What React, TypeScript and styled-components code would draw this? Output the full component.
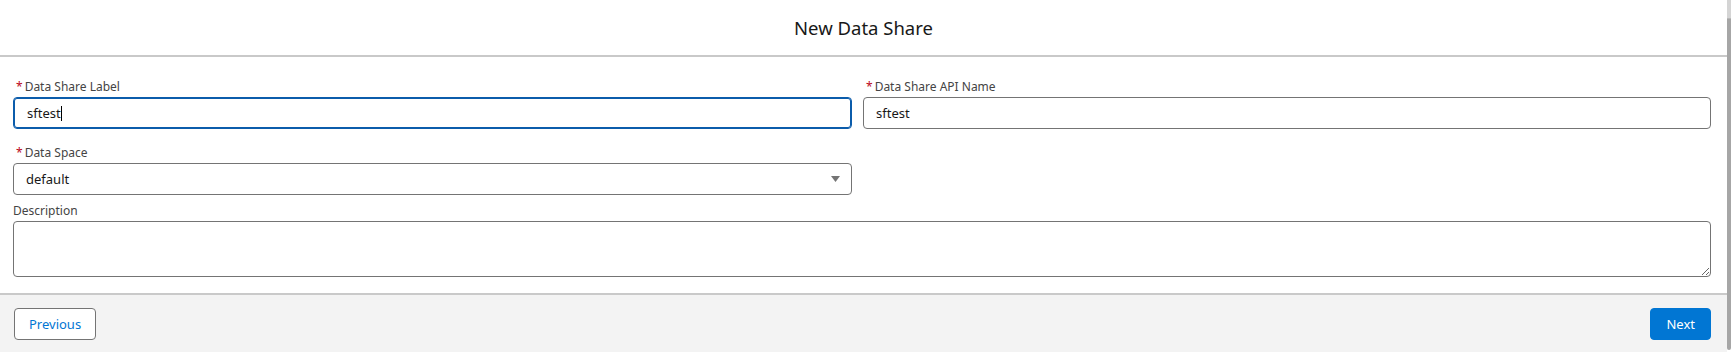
import React from 'react'
import styled, { createGlobalStyle } from 'styled-components'

const GlobalStyle = createGlobalStyle`
  html, body {
    margin: 0;
    padding: 0;
    background: #ffffff;
  }
  body {
    font-family: 'Noto Sans', 'Open Sans', sans-serif;
    color: #181818;
  }
`

const Page = styled.div`
  display: flex;
  height: 100vh;
  width: 100%;
`

const Modal = styled.div`
  flex: 1;
  display: flex;
  flex-direction: column;
  min-width: 0;
`

const Header = styled.header`
  height: 55px;
  display: flex;
  align-items: center;
  justify-content: center;
  border-bottom: 2px solid #c9c9c9;
`

const Title = styled.h2`
  margin: 0;
  font-size: 18.5px;
  font-weight: 400;
  color: #181818;
`

const Body = styled.div`
  padding: 21px 16px 16px 13px;
`

const Row = styled.div<{ $gap: number }>`
  display: grid;
  grid-template-columns: 839fr 848fr;
  column-gap: 11px;
  margin-bottom: ${p => p.$gap}px;
`

const Field = styled.div`
  display: flex;
  flex-direction: column;
`

const Label = styled.label`
  height: 18px;
  line-height: 18px;
  margin-bottom: 1px;
  font-size: 12px;
  color: #444444;
`

const Required = styled.abbr`
  color: #ba0517;
  text-decoration: none;
  margin: 0 2px 0 3px;
`

const TextBox = styled.div<{ $focused?: boolean }>`
  box-sizing: border-box;
  height: 32px;
  display: flex;
  align-items: center;
  padding-left: ${p => (p.$focused ? 13 : 12)}px;
  font-size: 13px;
  color: #181818;
  background: #ffffff;
  border: 1px solid ${p => (p.$focused ? '#0b5cab' : '#747474')};
  border-radius: 4px;
  box-shadow: ${p => (p.$focused ? 'inset 0 0 0 1px #0b5cab' : 'none')};
`

const Caret = styled.span`
  display: inline-block;
  width: 1px;
  height: 15px;
  background: #000000;
`

const SelectBox = styled(TextBox)`
  justify-content: space-between;
  padding-right: 11px;
`

const Arrow = () => (
  <svg width="9" height="6" viewBox="0 0 9 6">
    <path d="M0 0 H9 L4.5 6 Z" fill="#747474" />
  </svg>
)

const TextArea = styled.textarea`
  box-sizing: border-box;
  display: block;
  width: 100%;
  height: 56px;
  border: 1px solid #747474;
  border-radius: 4px;
  resize: vertical;
  font-family: inherit;
  font-size: 13px;
  padding: 6px 12px;
  outline: none;
`

const Footer = styled.footer`
  flex: 1;
  display: flex;
  justify-content: space-between;
  align-items: flex-start;
  padding: 13px 16px 0 14px;
  background: #f3f3f3;
  border-top: 2px solid #c9c9c9;
`

const Button = styled.button<{ $brand?: boolean }>`
  height: 32px;
  padding: 0 ${p => (p.$brand ? 15 : 14)}px;
  font-family: inherit;
  font-size: 13px;
  border-radius: 4px;
  cursor: pointer;
  border: 1px solid ${p => (p.$brand ? '#0176d3' : '#747474')};
  background: ${p => (p.$brand ? '#0176d3' : '#ffffff')};
  color: ${p => (p.$brand ? '#ffffff' : '#0176d3')};
`

const ScrollTrack = styled.div`
  width: 4px;
  display: flex;
  flex-direction: column;
`

const ScrollCap = styled.div`
  height: 18px;
  background: #d4d4d4;
  border-bottom: 1px solid #b8b8b8;
`

const ScrollThumb = styled.div`
  flex: 1;
  background: #a6a6a6;
  margin-bottom: 2px;
  border-radius: 0 0 2px 2px;
`

export default function App() {
  return (
    <Page>
      <GlobalStyle />
      <Modal>
        <Header>
          <Title>New Data Share</Title>
        </Header>
        <Body>
          <Row $gap={15}>
            <Field>
              <Label>
                <Required title="required">*</Required>Data Share Label
              </Label>
              <TextBox $focused>
                sftest
                <Caret />
              </TextBox>
            </Field>
            <Field>
              <Label>
                <Required title="required">*</Required>Data Share API Name
              </Label>
              <TextBox>sftest</TextBox>
            </Field>
          </Row>
          <Row $gap={7}>
            <Field>
              <Label>
                <Required title="required">*</Required>Data Space
              </Label>
              <SelectBox>
                default
                <Arrow />
              </SelectBox>
            </Field>
          </Row>
          <Field>
            <Label>Description</Label>
            <TextArea readOnly />
          </Field>
        </Body>
        <Footer>
          <Button>Previous</Button>
          <Button $brand>Next</Button>
        </Footer>
      </Modal>
      <ScrollTrack>
        <ScrollCap />
        <ScrollThumb />
      </ScrollTrack>
    </Page>
  )
}
